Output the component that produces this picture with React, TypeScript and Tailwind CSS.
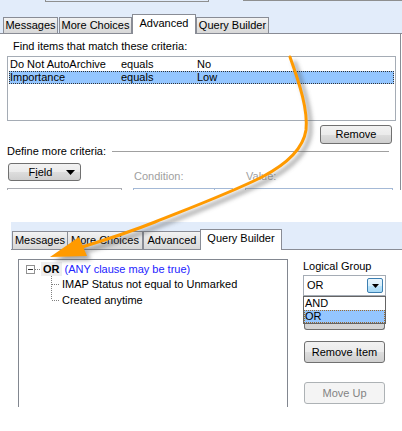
import React from "react";

const btn =
  "flex items-center justify-center border border-[#707070] rounded-[3px] bg-[linear-gradient(#f2f2f2_0%,#ebebeb_50%,#dddddd_51%,#cfcfcf_100%)] text-black";

function Tab({ label, w, selected, h, extra = "" }: { label: string; w: string; selected?: boolean; h: string; extra?: string }) {
  return (
    <div
      className={
        "flex items-center justify-center border-t border-x border-[#898c95] whitespace-nowrap " +
        w +
        " " +
        h +
        " " +
        extra +
        (selected
          ? " bg-white relative z-10 mb-[-1px] items-start pt-[2px]"
          : " bg-[linear-gradient(#f3f3f3,#e4e4e4_50%,#d8d8d8)]")
      }
    >
      {label}
    </div>
  );
}

function TreeConn({ last }: { last?: boolean }) {
  return (
    <svg width="9" height="16" className="shrink-0">
      <line x1="0.5" y1={0} x2="0.5" y2={last ? 8 : 16} stroke="#808080" strokeWidth="1" strokeDasharray="1 1" />
      <line x1="1" y1="8.5" x2="9" y2="8.5" stroke="#808080" strokeWidth="1" strokeDasharray="1 1" />
    </svg>
  );
}

export default function App() {
  const arrow = "M290 57 C300 85 308 110 306 130 C303 150 285 165 262 177 C230 193 190 208 155 222 C130 232 105 240 82 247";
  return (
    <div
      className="w-[402px] h-[431px] bg-white relative overflow-hidden text-[11px] leading-[13px] text-black"
      style={{ fontFamily: '"Liberation Sans", Arial, sans-serif' }}
    >
      {/* Top screenshot */}
      <div className="h-[190px] overflow-hidden">
        <div className="bg-[#e2ecfa] h-[34px] flex flex-col">
          <div className="flex h-[2px] shrink-0">
            <div className="ml-[45px] w-[164px] h-[2px] border-x border-b border-[#8e8f8f]" />
            <div className="ml-[34px] flex-1 h-[1px] bg-[#8e8f8f]" />
          </div>
          <div className="flex-1 flex items-end pl-[3px] border-b border-[#898c95]">
            <Tab label="Messages" w="w-[55px]" h="h-[16px]" />
            <Tab label="More Choices" w="w-[73px]" h="h-[16px]" extra="ml-[1px]" />
            <Tab label="Advanced" w="w-[64px]" h="h-[20px]" selected />
            <Tab label="Query Builder" w="w-[73px]" h="h-[16px]" />
          </div>
        </div>
        <div className="w-[401px] h-[156px] border-r border-[#898c95] flex flex-col">
          <div className="mt-[6px] pl-[13px]">Find items that match these criteria:</div>
          <div className="mt-[3px] ml-[7px] w-[389px] h-[65px] shrink-0 border border-[#a5acb5] pt-[1px]">
            <div className="mx-[1px] h-[13px] flex items-center border border-transparent leading-[11px]">
              <span className="w-[111px]">Do Not AutoArchive</span>
              <span className="w-[76px]">equals</span>
              <span>No</span>
            </div>
            <div className="mx-[1px] h-[13px] flex items-center border border-dotted border-[#333] bg-[#94c6ff] leading-[11px]">
              <span className="w-[111px]">Importance</span>
              <span className="w-[76px]">equals</span>
              <span>Low</span>
            </div>
          </div>
          <div className={btn + " mt-[4px] ml-[320px] w-[72px] h-[19px] shrink-0"}>Remove</div>
          <div className="mt-[1px] h-[13px] flex items-center shrink-0">
            <span className="pl-[7px] whitespace-nowrap">Define more criteria:</span>
            <div className="ml-[6px] mr-[11px] flex-1 h-px bg-[#a0a0a0]" />
          </div>
          <div className="mt-[5px] h-[18px] flex shrink-0">
            <div className={btn + " ml-[8px] w-[73px] h-[18px] relative"}>
              <span className="ml-[-8px]">
                F<span className="underline">i</span>eld
              </span>
              <svg width="9" height="5" className="absolute right-[5px] top-[6px]">
                <polygon points="0,0 9,0 4.5,5" fill="#000" />
              </svg>
            </div>
            <div className="ml-[53px] w-[112px] mt-[7px] text-[#a0a0a0]">Condition:</div>
            <div className="mt-[7px] text-[#a0a0a0]">Value:</div>
          </div>
          <div className="mt-[7px] flex shrink-0">
            <div className="ml-[7px] w-[115px] h-[10px] border border-[#abadb3]" />
            <div className="ml-[11px] w-[100px] h-[10px] border border-[#a4b9d6] flex justify-end">
              <div className="w-[18px] h-full border-l border-[#a4b9d6]" />
            </div>
            <div className="ml-[12px] w-[148px] h-[10px] border border-[#a4b9d6]" />
          </div>
        </div>
      </div>

      {/* Bottom screenshot */}
      <div className="mt-[32px] ml-[11px] h-[185px] overflow-hidden">
        <div className="bg-[#e2ecfa] h-[28px] flex items-end pl-[1px] border-b border-[#898c95]">
          <Tab label="Messages" w="w-[56px]" h="h-[18px]" />
          <Tab label="More Choices" w="w-[76px]" h="h-[18px]" extra="ml-[-1px]" />
          <Tab label="Advanced" w="w-[58px]" h="h-[18px]" />
          <Tab label="Query Builder" w="w-[82px]" h="h-[21px]" selected extra="ml-[-1px]" />
        </div>
        <div className="flex">
          <div className="mt-[9px] ml-[7px] w-[270px] h-[160px] border border-[#828790] shrink-0">
            <div className="mt-[2px] h-[14px] flex items-center">
              <div className="ml-[7px] w-[9px] h-[9px] border border-[#919191] bg-white flex items-center justify-center">
                <div className="w-[5px] h-px bg-[#333]" />
              </div>
              <svg width="6" height="1" className="shrink-0">
                <line x1="0" y1="0.5" x2="6" y2="0.5" stroke="#808080" strokeDasharray="1 1" />
              </svg>
              <span className="px-[2px] bg-[#eeeeee] font-bold h-[14px] leading-[14px]">OR</span>
              <span className="ml-[3px] text-[#2323ff]">(ANY clause may be true)</span>
            </div>
            <div className="h-[16px] flex items-center pl-[32px]">
              <TreeConn />
              <span className="ml-[2px] whitespace-nowrap">IMAP Status not equal to Unmarked</span>
            </div>
            <div className="h-[16px] flex items-center pl-[32px]">
              <TreeConn last />
              <span className="ml-[2px]">Created anytime</span>
            </div>
          </div>
          <div className="ml-[15px] w-[83px] flex flex-col shrink-0">
            <div className="mt-[10px] whitespace-nowrap">Logical Group</div>
            <div className="mt-[2px] h-[21px] border border-[#a5acb5] flex items-start shrink-0">
              <span className="pl-[3px] mt-[3px] flex-1">OR</span>
              <div className="mt-[2px] mr-[2px] w-[16px] h-[15px] rounded-[2px] border border-[#3c7fb1] bg-[linear-gradient(#eaf6fd,#d9f0fc_50%,#bee6fd_51%,#a7d9f5)] flex items-center justify-center">
                <svg width="7" height="4">
                  <polygon points="0,0 7,0 3.5,4" fill="#000" />
                </svg>
              </div>
            </div>
            <div className="h-[28px] border border-[#646464] bg-white shrink-0 flex flex-col">
              <div className="h-[13px] leading-[13px] pl-[1px]">AND</div>
              <div className="h-[13px] leading-[11px] border border-dotted border-[#9a6a30] bg-[#94c6ff]">OR</div>
            </div>
            <div className="ml-[1px] w-[81px] h-[6px] border-x border-b border-[#707070] rounded-b-[3px] bg-[#d4d4d4] shrink-0" />
            <div className={btn + " mt-[11px] ml-[1px] w-[81px] h-[22px] shrink-0"}>Remove Item</div>
            <div className="mt-[19px] ml-[1px] w-[81px] h-[22px] shrink-0 flex items-center justify-center border border-[#adb2b5] rounded-[3px] bg-[#f4f4f4] text-[#838383]">
              Move Up
            </div>
          </div>
        </div>
      </div>

      {/* Arrow overlay */}
      <svg className="absolute left-0 top-0 pointer-events-none" width="402" height="431" viewBox="0 0 402 431">
        <defs>
          <filter id="sh" x="-20%" y="-20%" width="140%" height="140%">
            <feGaussianBlur stdDeviation="2" />
          </filter>
        </defs>
        <g transform="translate(4,4)" opacity="0.5" filter="url(#sh)">
          <path d={arrow} stroke="#555" strokeWidth="4" fill="none" />
          <polygon points="50,257 79,237 87,256" fill="#555" />
        </g>
        <path d={arrow} stroke="#ff9a00" strokeWidth="3" fill="none" strokeLinecap="round" />
        <polygon points="50,257 79,237 87,256" fill="#ff9a00" />
      </svg>
    </div>
  );
}
